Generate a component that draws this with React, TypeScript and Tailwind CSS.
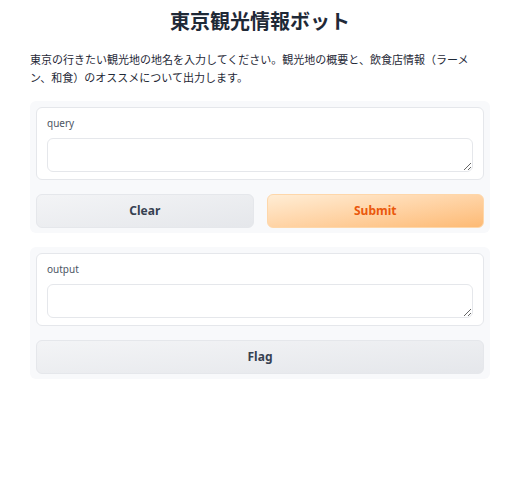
import React from 'react';

const font = { fontFamily: '"Noto Sans", "Noto Sans CJK JP", sans-serif' };

function TextBlock({ label }: { label: string }) {
  return (
    <div className="bg-white border border-[#e5e7eb] rounded-[6px] px-[10px] pt-[8px] pb-[7px] flex flex-col">
      <span className="text-[10px] leading-[14px] text-[#4b5563]">{label}</span>
      <textarea
        className="mt-[8px] h-[34px] w-full border border-[#e5e7eb] rounded-[6px] bg-white outline-none resize-y"
        rows={1}
      />
    </div>
  );
}

export default function App() {
  return (
    <div className="w-[520px] h-[484px] bg-white px-[30px] pt-[10px]" style={font}>
      <h1 className="text-center text-[20px] leading-[24px] font-bold text-[#1f2937]">
        東京観光情報ボット
      </h1>
      <p className="mt-[17px] pr-[8px] text-[11px] leading-[18px] text-[#1f2937]">
        東京の行きたい観光地の地名を入力してください。観光地の概要と、飲食店情報（ラーメン、和食）のオススメについて出力します。
      </p>

      {/* input panel */}
      <div className="mt-[14px] bg-[#f8f9fb] rounded-[6px] p-[6px] pb-[5px] flex flex-col gap-[14px]">
        <TextBlock label="query" />
        <div className="grid grid-cols-2 gap-[13px]">
          <button className="h-[34px] rounded-[6px] border border-[#e5e7eb] bg-gradient-to-br from-[#f3f4f6] to-[#e5e7eb] text-[12px] font-bold text-[#374151]">
            Clear
          </button>
          <button className="h-[34px] rounded-[6px] border border-[#fed7aa] bg-gradient-to-br from-[#ffedd5] to-[#fdba74] text-[12px] font-bold text-[#ea580c]">
            Submit
          </button>
        </div>
      </div>

      {/* output panel */}
      <div className="mt-[14px] bg-[#f8f9fb] rounded-[6px] p-[6px] pb-[5px] flex flex-col gap-[14px]">
        <TextBlock label="output" />
        <button className="h-[34px] rounded-[6px] border border-[#e5e7eb] bg-gradient-to-br from-[#f3f4f6] to-[#e5e7eb] text-[12px] font-bold text-[#374151]">
          Flag
        </button>
      </div>
    </div>
  );
}
